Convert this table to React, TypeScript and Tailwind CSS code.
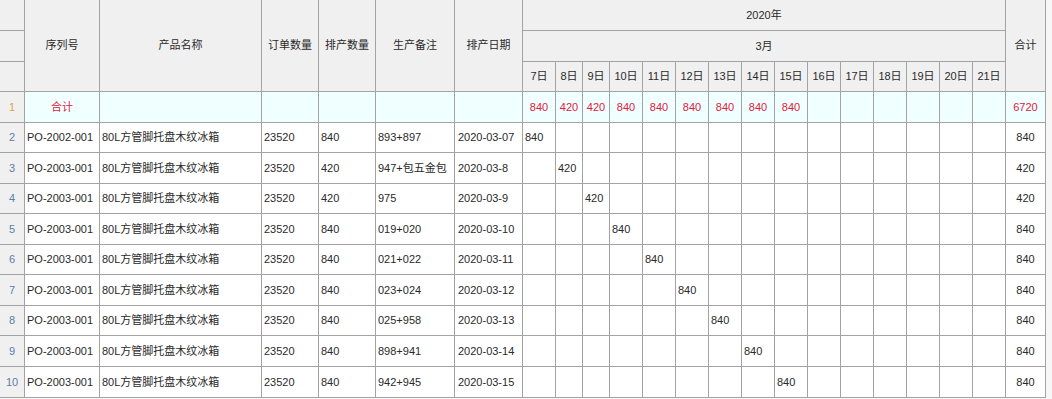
import React from 'react';

const days = ['7日', '8日', '9日', '10日', '11日', '12日', '13日', '14日', '15日', '16日', '17日', '18日', '19日', '20日', '21日'];

const sumRow = ['840', '420', '420', '840', '840', '840', '840', '840', '840', '', '', '', '', '', ''];

const rows = [
  { po: 'PO-2002-001', qty: '840', note: '893+897', date: '2020-03-07' },
  { po: 'PO-2003-001', qty: '420', note: '947+包五金包', date: '2020-03-8' },
  { po: 'PO-2003-001', qty: '420', note: '975', date: '2020-03-9' },
  { po: 'PO-2003-001', qty: '840', note: '019+020', date: '2020-03-10' },
  { po: 'PO-2003-001', qty: '840', note: '021+022', date: '2020-03-11' },
  { po: 'PO-2003-001', qty: '840', note: '023+024', date: '2020-03-12' },
  { po: 'PO-2003-001', qty: '840', note: '025+958', date: '2020-03-13' },
  { po: 'PO-2003-001', qty: '840', note: '898+941', date: '2020-03-14' },
  { po: 'PO-2003-001', qty: '840', note: '942+945', date: '2020-03-15' },
];

const cell = 'border-r border-b border-[#a3a3a3] flex items-center overflow-hidden whitespace-nowrap';
const head = `${cell} bg-[#f0f0f0] justify-center`;

export default function App() {
  return (
    <div
      className="w-[1052px] h-[399px] overflow-hidden bg-[#f7f7f7] text-[11px] leading-none text-[#2a2a2a]"
      style={{ fontFamily: '"Liberation Sans", "Noto Sans CJK SC", sans-serif' }}
    >
      <div className="grid w-fit grid-cols-[25px_75px_162px_57px_57px_79px_68px_33px_27px_27px_repeat(12,33px)_40px] grid-rows-[31px_31px_30px_31px_30px_31px_30px_31px_30px_31px_30px_31px_31px] bg-white">
        {/* header rows */}
        <div className={`${head} col-start-1 row-start-1`} />
        <div className={`${head} col-start-1 row-start-2`} />
        <div className={`${head} col-start-1 row-start-3`} />
        <div className={`${head} col-start-2 row-start-1 row-span-3`}>序列号</div>
        <div className={`${head} col-start-3 row-start-1 row-span-3`}>产品名称</div>
        <div className={`${head} col-start-4 row-start-1 row-span-3`}>订单数量</div>
        <div className={`${head} col-start-5 row-start-1 row-span-3`}>排产数量</div>
        <div className={`${head} col-start-6 row-start-1 row-span-3`}>生产备注</div>
        <div className={`${head} col-start-7 row-start-1 row-span-3`}>排产日期</div>
        <div className={`${head} col-start-8 col-span-15 row-start-1`}>2020年</div>
        <div className={`${head} col-start-8 col-span-15 row-start-2`}>3月</div>
        {days.map((d) => (
          <div key={d} className={`${head} row-start-3`}>{d}</div>
        ))}
        <div className={`${head} col-start-23 row-start-1 row-span-3`}>合计</div>

        {/* sum row */}
        <div className={`${head} text-[#d9a441]`}>1</div>
        <div className={`${cell} bg-[#f0ffff] justify-center text-[#e0203a]`}>合计</div>
        <div className={`${cell} bg-[#f0ffff]`} />
        <div className={`${cell} bg-[#f0ffff]`} />
        <div className={`${cell} bg-[#f0ffff]`} />
        <div className={`${cell} bg-[#f0ffff]`} />
        <div className={`${cell} bg-[#f0ffff]`} />
        {sumRow.map((v, i) => (
          <div key={i} className={`${cell} bg-[#f0ffff] justify-center text-[#e0203a]`}>{v}</div>
        ))}
        <div className={`${cell} bg-[#f0ffff] justify-center text-[#e0203a]`}>6720</div>

        {/* data rows */}
        {rows.map((r, ri) => (
          <React.Fragment key={ri}>
            <div className={`${head} text-[#5b7ea6]`}>{ri + 2}</div>
            <div className={`${cell} pl-[2px]`}>{r.po}</div>
            <div className={`${cell} pl-[2px]`}>80L方管脚托盘木纹冰箱</div>
            <div className={`${cell} pl-[2px]`}>23520</div>
            <div className={`${cell} pl-[2px]`}>{r.qty}</div>
            <div className={`${cell} pl-[2px]`}>{r.note}</div>
            <div className={`${cell} pl-[3px]`}>{r.date}</div>
            {days.map((d, di) => (
              <div key={d} className={`${cell} pl-[2px]`}>{di === ri ? r.qty : ''}</div>
            ))}
            <div className={`${cell} justify-center`}>{r.qty}</div>
          </React.Fragment>
        ))}
      </div>
    </div>
  );
}
